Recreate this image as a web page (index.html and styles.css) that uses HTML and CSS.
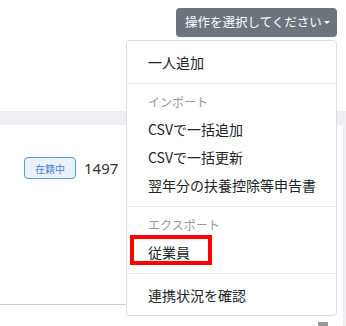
FILE: index.html
```html
<!DOCTYPE html>
<html lang="ja">
<head>
<meta charset="utf-8">
<link rel="stylesheet" href="styles.css">
</head>
<body>
<div class="page">
  <div class="toolbar">
    <div class="dropdown">
      <button class="btn">操作を選択してください<span class="caret"></span></button>
      <div class="menu">
        <div class="item">一人追加</div>
        <div class="divider"></div>
        <div class="header">インポート</div>
        <div class="item">CSVで一括追加</div>
        <div class="item">CSVで一括更新</div>
        <div class="item">翌年分の扶養控除等申告書</div>
        <div class="divider"></div>
        <div class="header">エクスポート</div>
        <div class="item mark-wrap">従業員<span class="mark"></span></div>
        <div class="divider"></div>
        <div class="item">連携状況を確認</div>
      </div>
    </div>
  </div>
  <div class="band"></div>
  <div class="card">
    <div class="row">
      <span class="badge">在籍中</span>
      <span class="num">1497</span>
    </div>
    <div class="rule"></div>
    <div class="foot"><span class="sq"></span></div>
  </div>
</div>
</body>
</html>
```
FILE: styles.css
```css
html, body {
  margin: 0;
  padding: 0;
  background: #fff;
  overflow: hidden;
}
body {
  font-family: "Noto Sans CJK JP", "Noto Sans", sans-serif;
  color: #212529;
}
.page {
  width: 346px;
  height: 326px;
  overflow: hidden;
  background: #eeeff3;
}
.toolbar {
  height: 111px;
  box-sizing: border-box;
  padding: 8px 9px 0 0;
  display: flex;
  justify-content: flex-end;
  align-items: flex-start;
  background: #fff;
}
.dropdown {
  position: relative;
}
.btn {
  display: flex;
  align-items: center;
  height: 29px;
  width: 161px;
  box-sizing: border-box;
  padding: 0 0 0 9px;
  border: none;
  border-radius: 4px;
  background: #6c757d;
  color: #fff;
  font-family: inherit;
  font-size: 12.5px;
  line-height: 1;
  white-space: nowrap;
}
.caret {
  display: inline-block;
  margin-left: 2px;
  width: 0;
  height: 0;
  border-left: 3px solid transparent;
  border-right: 3px solid transparent;
  border-top: 3px solid #fff;
}
.menu {
  position: absolute;
  top: 32px;
  right: 0;
  width: 211px;
  box-sizing: border-box;
  padding: 7px 0 6px;
  background: #fff;
  border: 1px solid #dcdde0;
  border-radius: 4px;
  z-index: 2;
}
.item {
  height: 28px;
  line-height: 28px;
  padding-left: 21px;
  font-size: 14px;
  color: #212529;
  white-space: nowrap;
}
.header {
  height: 24px;
  line-height: 22px;
  padding-left: 21px;
  font-size: 12px;
  color: #9a9a9a;
}
.divider {
  border-top: 1px solid #e9ecef;
  margin: 7px 0;
}
.mark-wrap {
  position: relative;
}
.mark {
  position: absolute;
  left: 3px;
  top: -3px;
  width: 82px;
  height: 30px;
  box-sizing: border-box;
  border: 4px solid #ff0000;
}
.band {
  height: 14px;
}
.card {
  height: 201px;
  background: #fff;
  border-top-right-radius: 4px;
  margin-right: 3px;
}
.row {
  display: flex;
  align-items: center;
  gap: 8px;
  padding: 32px 0 0 24px;
}
.badge {
  display: inline-flex;
  align-items: center;
  justify-content: center;
  width: 52px;
  height: 22px;
  box-sizing: border-box;
  border: 1px solid #5a97e6;
  border-radius: 4px;
  background: #e9f1fd;
  color: #4a84d4;
  font-size: 10px;
}
.num {
  font-family: "Noto Sans", sans-serif;
  font-size: 15px;
  color: #333;
}
.rule {
  margin-top: 125px;
  margin-right: 16px;
  border-top: 1px solid #cfcfcf;
}
.foot {
  display: flex;
  justify-content: flex-end;
  padding: 17px 15px 0 0;
}
.sq {
  display: block;
  width: 10px;
  height: 10px;
  background: #9a9a9a;
}
```
